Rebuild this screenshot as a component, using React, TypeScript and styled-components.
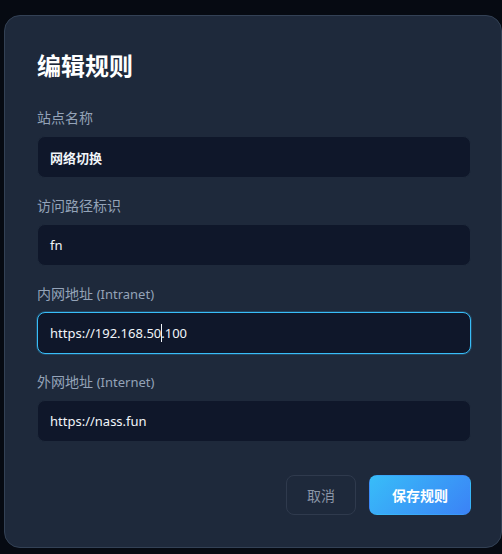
import styled, { createGlobalStyle } from "styled-components";

const GlobalStyle = createGlobalStyle`
  html, body {
    margin: 0;
    padding: 0;
    background: #060a12;
    overflow: hidden;
  }
  body {
    font-family: "Noto Sans", "Noto Sans CJK SC", sans-serif;
  }
`;

const Page = styled.div`
  width: 502px;
  height: 554px;
  padding: 15px 0 0 4px;
  box-sizing: border-box;
`;

const Card = styled.div`
  width: 498px;
  height: 533px;
  box-sizing: border-box;
  background: #1e293b;
  border: 1px solid #334155;
  border-radius: 16px;
  padding: 34px 30px 32px 32px;
  display: flex;
  flex-direction: column;
`;

const Title = styled.h2`
  margin: 0 0 26px;
  font-size: 24px;
  line-height: 32px;
  font-weight: 700;
  color: #ffffff;
`;

const Form = styled.div`
  display: flex;
  flex-direction: column;
  gap: 18px;
`;

const Group = styled.div`
  display: flex;
  flex-direction: column;
  gap: 8px;
`;

const Label = styled.label`
  font-size: 14px;
  line-height: 20px;
  color: #94a3b8;
`;

const Hint = styled.span`
  font-size: 13px;
`;

const Field = styled.div<{ $focused?: boolean }>`
  height: 42px;
  box-sizing: border-box;
  display: flex;
  align-items: center;
  padding: 0 12px;
  background: #0f172a;
  border: 1px solid ${(p) => (p.$focused ? "#38bdf8" : "#1e293b")};
  border-radius: 8px;
  color: #f1f5f9;
  font-size: 13px;
  box-shadow: ${(p) => (p.$focused ? "0 0 0 1px rgba(56,189,248,0.2)" : "none")};
`;

const Value = styled.span<{ $bold?: boolean }>`
  font-weight: ${(p) => (p.$bold ? 700 : 400)};
  white-space: pre;
`;

const Caret = styled.span`
  display: inline-block;
  width: 1px;
  height: 18px;
  background: #f1f5f9;
  margin: 0 -1px 0 0;
`;

const Actions = styled.div`
  margin-top: auto;
  display: flex;
  justify-content: flex-end;
  gap: 13px;
`;

const Button = styled.button<{ $primary?: boolean }>`
  height: 40px;
  padding: 0 ${(p) => (p.$primary ? "22px" : "20px")};
  border-radius: 8px;
  font-family: inherit;
  font-size: 14px;
  font-weight: ${(p) => (p.$primary ? 700 : 400)};
  color: ${(p) => (p.$primary ? "#ffffff" : "#8b95a7")};
  background: ${(p) =>
    p.$primary ? "linear-gradient(135deg, #38bdf8 0%, #3b82f6 100%)" : "transparent"};
  border: 1px solid ${(p) => (p.$primary ? "transparent" : "#2f3a4d")};
  cursor: pointer;
`;

export default function App() {
  return (
    <Page>
      <GlobalStyle />
      <Card>
        <Title>编辑规则</Title>
        <Form>
          <Group>
            <Label>站点名称</Label>
            <Field>
              <Value $bold>网络切换</Value>
            </Field>
          </Group>
          <Group>
            <Label>访问路径标识</Label>
            <Field>
              <Value>fn</Value>
            </Field>
          </Group>
          <Group>
            <Label>
              内网地址 <Hint>(Intranet)</Hint>
            </Label>
            <Field $focused>
              <Value>https://192.168.50</Value>
              <Caret />
              <Value>.100</Value>
            </Field>
          </Group>
          <Group>
            <Label>
              外网地址 <Hint>(Internet)</Hint>
            </Label>
            <Field>
              <Value>https://nass.fun</Value>
            </Field>
          </Group>
        </Form>
        <Actions>
          <Button>取消</Button>
          <Button $primary>保存规则</Button>
        </Actions>
      </Card>
    </Page>
  );
}
